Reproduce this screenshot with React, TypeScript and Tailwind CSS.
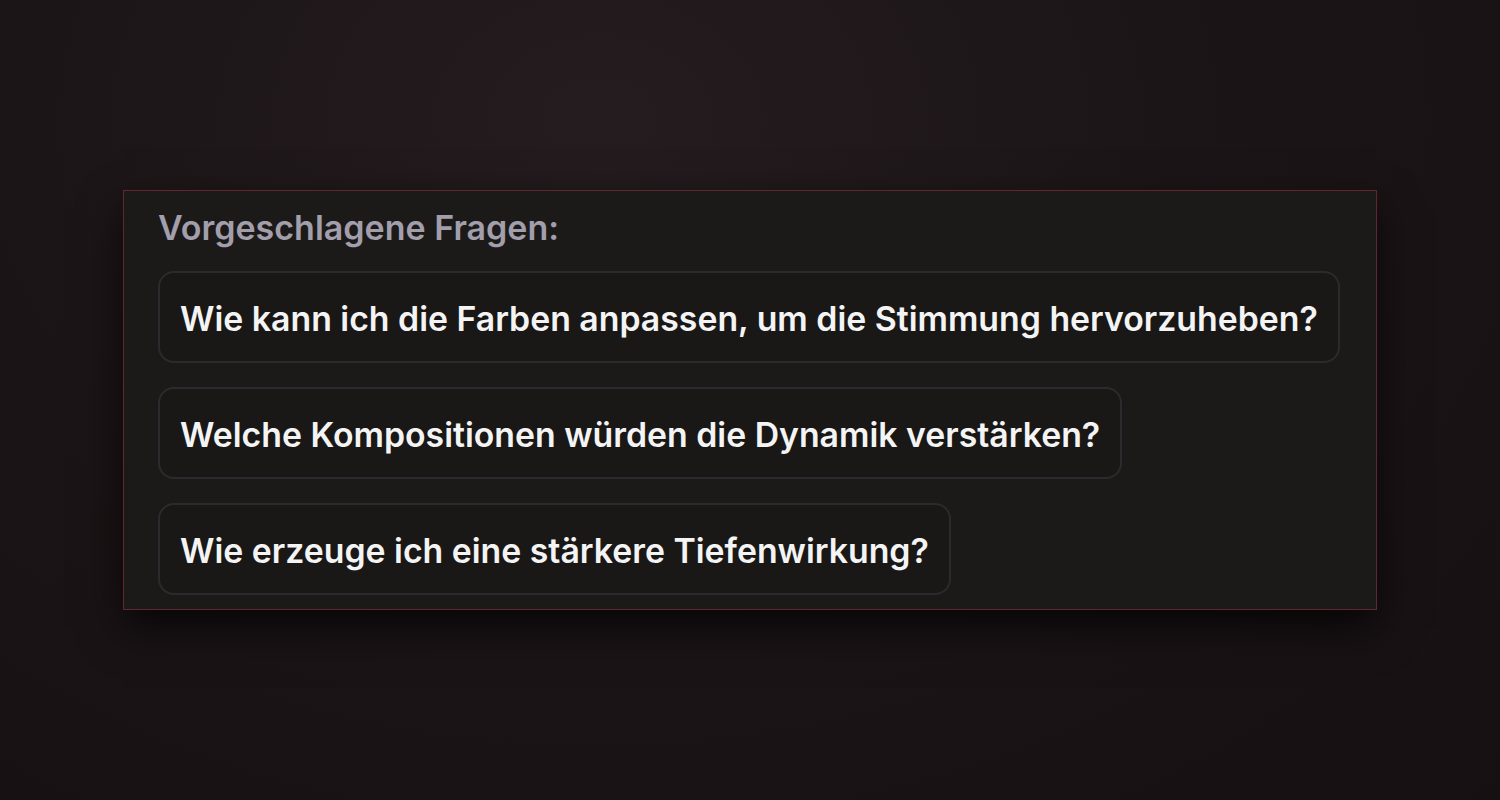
const questions = [
  "Wie kann ich die Farben anpassen, um die Stimmung hervorzuheben?",
  "Welche Kompositionen würden die Dynamik verstärken?",
  "Wie erzeuge ich eine stärkere Tiefenwirkung?",
];

export default function App() {
  return (
    <div
      className="min-h-screen w-full bg-[#1a1315] bg-[radial-gradient(ellipse_at_40%_15%,#241c1e_0%,#1c1517_45%,#171012_100%)] pt-[190px]"
      style={{ fontFamily: "Inter, 'Noto Sans', sans-serif" }}
    >
      <div className="mx-auto w-[1254px] border border-[#5e2732] bg-[#1c1a19] pl-[34px] pr-[28px] pt-[16px] pb-[14px] shadow-[0_18px_40px_rgba(0,0,0,0.7)]">
        <div className="mb-[22px] text-[34px] leading-[42px] font-[560] text-[#a29eab]">
          Vorgeschlagene Fragen:
        </div>
        <div className="flex flex-col items-start gap-6">
          {questions.map((q) => (
            <button
              key={q}
              className="w-fit whitespace-nowrap rounded-[16px] border-2 border-[#2b2a2f] bg-[#1a1817] px-5 pt-[23px] pb-[19px] text-left text-[33.8px] leading-[46px] font-[560] text-[#f4f4f4]"
            >
              {q}
            </button>
          ))}
        </div>
      </div>
    </div>
  );
}
